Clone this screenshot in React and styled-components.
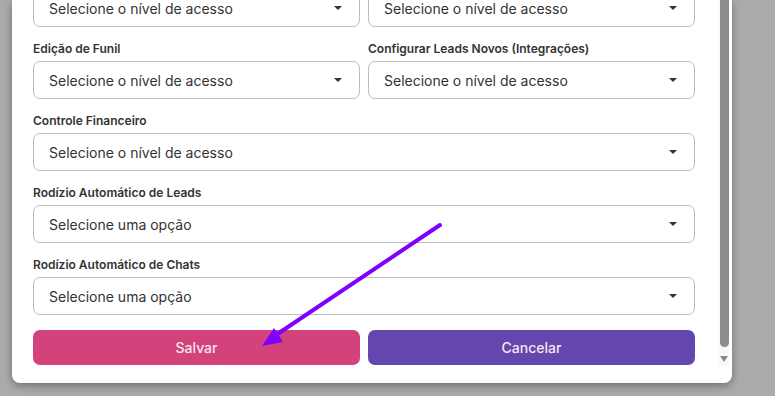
import React from 'react'
import styled, { createGlobalStyle } from 'styled-components'

const GlobalStyle = createGlobalStyle`
  html, body {
    margin: 0;
    padding: 0;
    height: 396px;
    overflow: hidden;
    background: #ababab;
    font-family: Inter, "Liberation Sans", sans-serif;
  }
`;

const Page = styled.div`
  position: relative;
  height: 396px;
  padding-left: 12px;
`;

const Modal = styled.div`
  width: 717px;
  height: 366px;
  padding: 0 3px 17px 0;
  background: #fff;
  border-radius: 0 0 8px 8px;
  box-shadow: 0 3px 8px rgba(0, 0, 0, 0.35);
  display: flex;
`;

const Body = styled.div`
  flex: 1;
  overflow: hidden;
  padding: 0 24px 0 21px;
  display: flex;
  flex-direction: column;
  justify-content: flex-end;
`;

const Grid = styled.div`
  display: grid;
  grid-template-columns: ${p => (p.$single ? '1fr' : '1fr 1fr')};
  column-gap: 8px;
  margin-bottom: 12px;
`;

const Field = styled.div`
  display: flex;
  flex-direction: column;
`;

const Label = styled.label`
  font-size: 12px;
  font-weight: 600;
  line-height: 19px;
  color: #333;
  margin-bottom: 3px;
`;

const Select = styled.div`
  height: 36px;
  border: 1px solid #bdbdbd;
  border-radius: 7px;
  display: flex;
  align-items: center;
  justify-content: space-between;
  padding: 0 17px 0 15px;
  font-size: 14px;
  color: #333;
`;

const Caret = styled.span`
  width: 0;
  height: 0;
  border-left: 4px solid transparent;
  border-right: 4px solid transparent;
  border-top: 4px solid #333;
`;

const Actions = styled.div`
  display: grid;
  grid-template-columns: 1fr 1fr;
  column-gap: 8px;
  margin-top: 3px;
  margin-bottom: 1px;
`;

const Button = styled.button`
  height: 35px;
  border: none;
  border-radius: 7px;
  background: ${p => p.$bg};
  color: #f4e6ef;
  font-family: Inter, "Liberation Sans", sans-serif;
  font-size: 14px;
  font-weight: 500;
`;

const Scrollbar = styled.div`
  width: 10px;
  display: flex;
  flex-direction: column;
  align-items: center;
  background: #f8f8f8;
`;

const Thumb = styled.div`
  width: 9px;
  height: 347px;
  background: #8c8c8c;
  border-radius: 0 0 5px 5px;
`;

const DownArrow = styled.span`
  margin-top: 9px;
  width: 0;
  height: 0;
  border-left: 4px solid transparent;
  border-right: 4px solid transparent;
  border-top: 6px solid #8a8a8a;
`;

const Pointer = styled.svg`
  position: absolute;
  left: 0;
  top: 0;
  pointer-events: none;
`;

const rows = [
  [
    { label: 'Visualização de Leads', placeholder: 'Selecione o nível de acesso' },
    { label: 'Edição de Leads', placeholder: 'Selecione o nível de acesso' },
  ],
  [
    { label: 'Edição de Funil', placeholder: 'Selecione o nível de acesso' },
    { label: 'Configurar Leads Novos (Integrações)', placeholder: 'Selecione o nível de acesso' },
  ],
  [{ label: 'Controle Financeiro', placeholder: 'Selecione o nível de acesso' }],
  [{ label: 'Rodízio Automático de Leads', placeholder: 'Selecione uma opção' }],
  [{ label: 'Rodízio Automático de Chats', placeholder: 'Selecione uma opção' }],
];

const App = () => {
  return (
    <Page>
      <GlobalStyle />
      <Modal>
        <Body>
          {rows.map((row, i) => (
            <Grid key={i} $single={row.length === 1}>
              {row.map(f => (
                <Field key={f.label}>
                  <Label>{f.label}</Label>
                  <Select>
                    {f.placeholder}
                    <Caret />
                  </Select>
                </Field>
              ))}
            </Grid>
          ))}
          <Actions>
            <Button $bg="#d3427a">Salvar</Button>
            <Button $bg="#6347ae">Cancelar</Button>
          </Actions>
        </Body>
        <Scrollbar>
          <Thumb />
          <DownArrow />
        </Scrollbar>
      </Modal>
      <Pointer width="775" height="396">
        <line x1="440" y1="225" x2="276" y2="335" stroke="#7f00ff" strokeWidth="4" strokeLinecap="round" />
        <polygon points="262,346 274,328 283,342" fill="#7f00ff" />
      </Pointer>
    </Page>
  )
}

export default App
